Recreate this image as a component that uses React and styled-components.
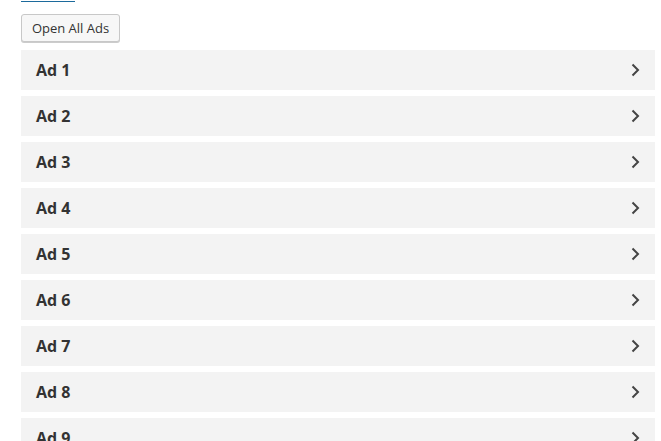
import React from "react";
import styled, { createGlobalStyle } from "styled-components";

const Global = createGlobalStyle`
  html, body { margin: 0; padding: 0; background: #fff; }
  body { font-family: "Open Sans", "Noto Sans", sans-serif; overflow: hidden; }
`;

const Page = styled.div`
  padding: 0 6px 0 21px;
  display: flex;
  flex-direction: column;
`;

const TabLine = styled.div`
  width: 54px;
  height: 1px;
  margin-top: 1px;
  background: #1c6a9c;
`;

const Button = styled.button`
  align-self: flex-start;
  margin-top: 12px;
  height: 28px;
  width: 99px;
  padding: 0;
  border: 1px solid #c8c8c8;
  border-radius: 3px;
  background: #f7f7f7;
  box-shadow: 0 1px 0 #ccc;
  font-family: "Open Sans", "Noto Sans", sans-serif;
  font-size: 13px;
  color: #333;
  cursor: pointer;
`;

const List = styled.div`
  margin-top: 8px;
  display: flex;
  flex-direction: column;
  gap: 6px;
`;

const Row = styled.div`
  height: 40px;
  background: #f3f3f3;
  display: flex;
  align-items: center;
  justify-content: space-between;
  padding: 0 14px 0 15px;
`;

const Title = styled.span`
  font-weight: 700;
  font-size: 16px;
  color: #333;
  line-height: 1;
`;

const Chevron = () => (
  <svg width="12" height="14" viewBox="0 0 12 14">
    <path d="M3.5 1.5 L9 7 L3.5 12.5" fill="none" stroke="#444" strokeWidth="2" />
  </svg>
);

export default function App() {
  const ads = [1, 2, 3, 4, 5, 6, 7, 8, 9];
  return (
    <>
      <Global />
      <Page>
        <TabLine />
        <Button>Open All Ads</Button>
        <List>
          {ads.map((n) => (
            <Row key={n}>
              <Title>Ad {n}</Title>
              <Chevron />
            </Row>
          ))}
        </List>
      </Page>
    </>
  );
}
